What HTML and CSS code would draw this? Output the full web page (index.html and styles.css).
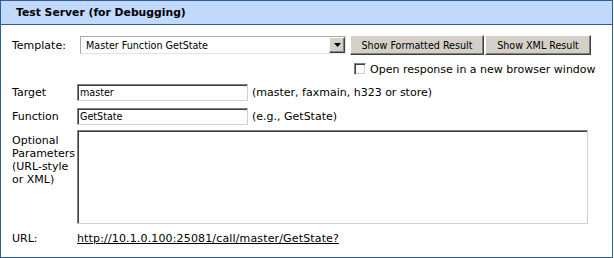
FILE: index.html
```html
<!DOCTYPE html>
<html lang="en">
<head>
    <meta charset="UTF-8">
    <title>Test Server (for Debugging)</title>
    <link rel="stylesheet" href="styles.css">
</head>
<body>
    <div class="panel">
        <div class="panel-head">Test Server (for Debugging)</div>
        <div class="panel-body">
            <!-- Template -->
            <div class="row row-template">
                <span class="label">Template:</span>
                <div class="field">
                    <div class="select">
                        <span class="select-text">Master Function GetState</span>
                        <span class="select-btn">
                            <svg width="7" height="4" viewBox="0 0 7 4"><path d="M0 0h7L3.5 4z" fill="#000"/></svg>
                        </span>
                    </div>
                    <button class="btn btn-formatted">Show Formatted Result</button>
                    <button class="btn btn-xml">Show XML Result</button>
                </div>
            </div>

            <div class="row row-check">
                <span class="label"></span>
                <label class="check"><span class="checkbox"></span>Open response in a new browser window</label>
            </div>

            <!-- Target / Function -->
            <div class="row row-input row-target">
                <span class="label">Target</span>
                <div class="field">
                    <input class="text" type="text" value="master">
                    <span class="hint">(master, faxmain, h323 or store)</span>
                </div>
            </div>
            <div class="row row-input">
                <span class="label">Function</span>
                <div class="field">
                    <input class="text" type="text" value="GetState">
                    <span class="hint">(e.g., GetState)</span>
                </div>
            </div>

            <div class="row row-params">
                <span class="label">Optional Parameters (URL-style or XML)</span>
                <div class="field">
                    <textarea class="params"></textarea>
                </div>
            </div>

            <div class="row row-url">
                <span class="label">URL:</span>
                <div class="field">
                    <a class="url" href="#">http://10.1.0.100:25081/call/master/GetState?</a>
                </div>
            </div>
        </div>
    </div>
</body>
</html>
```

FILE: styles.css
```css
body {
    margin: 0;
    background: #fff;
    font-family: "DejaVu Sans", Verdana, sans-serif;
    font-size: 11px;
    color: #000;
}
.panel {
    width: 611px;
    height: 256px;
    border: 1px solid #2e5e98;
    display: flex;
    flex-direction: column;
}
.panel-head {
    height: 23px;
    line-height: 23px;
    background: #c1d9fc;
    border-bottom: 1px solid #2e5e98;
    padding-left: 15px;
    font-weight: bold;
    font-size: 10.8px;
}
.panel-body {
    padding: 9px 0 0 11px;
}
.row {
    display: grid;
    grid-template-columns: 65px 1fr;
    align-items: center;
}
.field {
    display: flex;
    align-items: center;
}
.row-template {
    height: 22px;
}
.select {
    margin-left: 3px;
    width: 266px;
    height: 18px;
    box-sizing: border-box;
    border: 1px solid;
    border-color: #a9a9a9 #e4e4e4 #e4e4e4 #a9a9a9;
    display: flex;
    align-items: center;
    background: #fff;
}
.select-text, .text, .btn {
    font-family: "DejaVu Sans Condensed", Tahoma, sans-serif;
    font-size: 8pt;
}
.select-text {
    flex: 1;
    padding-left: 5px;
}
.select-btn {
    width: 16px;
    height: 16px;
    box-sizing: border-box;
    background: #d4d0c8;
    border: 1px solid;
    border-color: #fff #404040 #404040 #fff;
    box-shadow: inset -1px -1px 0 #808080;
    display: flex;
    align-items: center;
    justify-content: center;
}
.btn {
    height: 20px;
    box-sizing: border-box;
    background: #d4d0c8;
    color: #000;
    border: 1px solid;
    border-color: #fff #404040 #404040 #fff;
    box-shadow: inset -1px -1px 0 #808080;
    padding: 0 4px;
    margin: 0;
}
.btn-formatted {
    width: 134px;
    margin-left: 4px;
}
.btn-xml {
    width: 106px;
    margin-left: 1px;
}
.row-check {
    margin-top: 6px;
    height: 14px;
}
.check {
    display: flex;
    align-items: center;
    margin-left: 277px;
}
.checkbox {
    width: 12px;
    height: 12px;
    box-sizing: border-box;
    border: 1px solid;
    border-color: #808080 #fff #fff #808080;
    box-shadow: inset 1px 1px 0 #404040, inset -1px -1px 0 #d4d0c8;
    background: #fff;
    margin-right: 4px;
}
.row-input {
    height: 20px;
    margin-top: 4px;
}
.row-target {
    margin-top: 6px;
}
.text {
    width: 171px;
    height: 17px;
    box-sizing: border-box;
    border: 1px solid;
    border-color: #808080 #d4d0c8 #d4d0c8 #808080;
    box-shadow: inset 1px 1px 0 #404040;
    padding: 0 2px;
    margin: 0;
    outline: none;
}
.hint {
    margin-left: 4px;
}
.row-params {
    margin-top: 4px;
    align-items: start;
}
.row-params .label {
    line-height: 13px;
    padding-top: 4px;
    padding-right: 2px;
}
.params {
    display: block;
    width: 511px;
    height: 94px;
    box-sizing: border-box;
    border: 1px solid;
    border-color: #808080 #d4d0c8 #d4d0c8 #808080;
    box-shadow: inset 1px 1px 0 #404040;
    margin: 0;
    resize: none;
    outline: none;
}
.row-url {
    margin-top: 6px;
    height: 16px;
}
.url {
    color: #000;
    text-decoration: underline;
    letter-spacing: 0.15px;
}
```
